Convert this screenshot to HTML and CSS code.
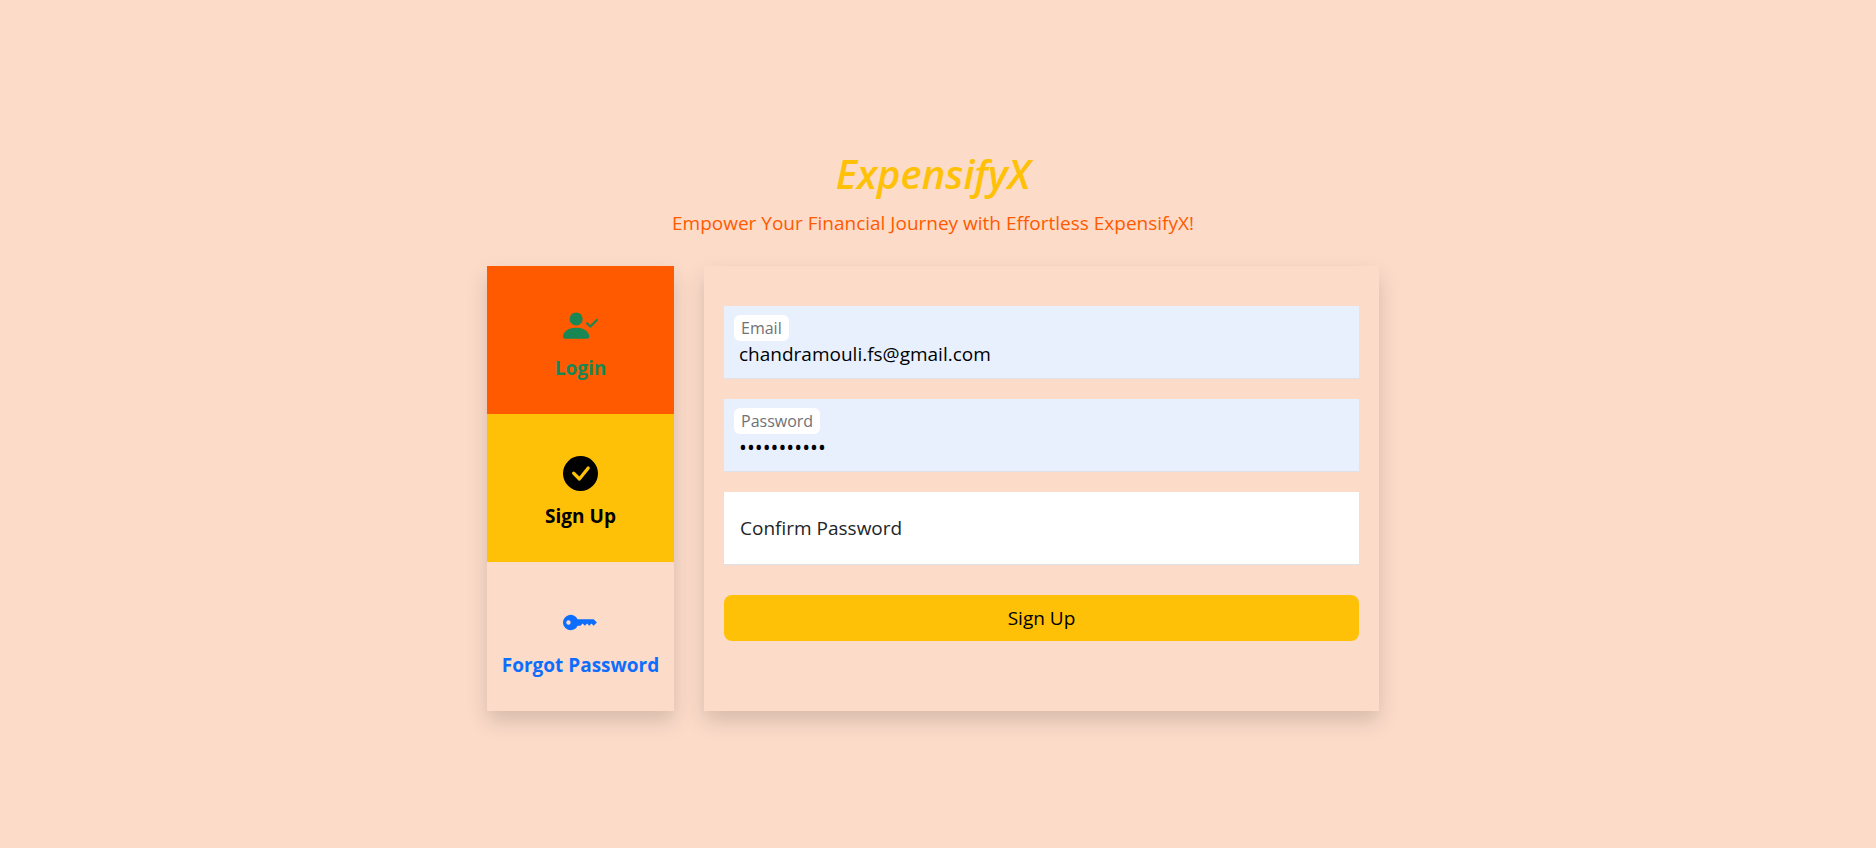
FILE: index.html
```html
<!DOCTYPE html>
<html lang="en">
<head>
<meta charset="utf-8">
<meta name="viewport" content="width=device-width, initial-scale=1">
<title>ExpensifyX</title>
<link rel="stylesheet" href="styles.css">
</head>
<body>
<main class="page">
  <header class="brand">
    <h1 class="brand-name">ExpensifyX</h1>
    <p class="brand-tagline">Empower Your Financial Journey with Effortless ExpensifyX!</p>
  </header>
  <div class="panels">
    <nav class="tabs" aria-label="Account">
      <a class="tab tab-login" href="#login">
        <svg class="tab-icon" viewBox="0 0 16 16" fill="currentColor" aria-hidden="true"><path fill-rule="evenodd" d="M15.854 5.146a.5.5 0 0 1 0 .708l-3 3a.5.5 0 0 1-.708 0l-1.5-1.5a.5.5 0 0 1 .708-.708L12.5 7.793l2.646-2.647a.5.5 0 0 1 .708 0z"/><path d="M1 14s-1 0-1-1 1-4 6-4 6 3 6 4-1 1-1 1H1zm5-6a3 3 0 1 0 0-6 3 3 0 0 0 0 6z"/></svg>
        <span>Login</span>
      </a>
      <a class="tab tab-signup" href="#signup" aria-current="page">
        <svg class="tab-icon" viewBox="0 0 16 16" fill="currentColor" aria-hidden="true"><path d="M16 8A8 8 0 1 1 0 8a8 8 0 0 1 16 0zm-3.97-3.03a.75.75 0 0 0-1.08.022L7.477 9.417 5.384 7.323a.75.75 0 0 0-1.06 1.06L6.97 11.03a.75.75 0 0 0 1.079-.02l3.992-4.99a.75.75 0 0 0-.01-1.05z"/></svg>
        <span>Sign Up</span>
      </a>
      <a class="tab tab-forgot" href="#forgot">
        <svg class="tab-icon" viewBox="0 0 16 16" fill="currentColor" aria-hidden="true"><path d="M3.5 11.5a3.5 3.5 0 1 1 3.163-5H14L15.5 8 14 9.5l-1-1-1 1-1-1-1 1-1-1-1 1H6.663a3.5 3.5 0 0 1-3.163 2zM2.5 9a1 1 0 1 0 0-2 1 1 0 0 0 0 2z"/></svg>
        <span>Forgot Password</span>
      </a>
    </nav>
    <form class="card">
      <div class="field">
        <input class="field-input" id="email" type="email" value="chandramouli.fs@gmail.com" placeholder=" ">
        <label class="field-label" for="email">Email</label>
      </div>
      <div class="field">
        <input class="field-input field-secret" id="password" type="password" value="expensify11" placeholder=" ">
        <label class="field-label" for="password">Password</label>
      </div>
      <div class="field">
        <input class="field-input field-secret" id="confirm" type="password" placeholder=" ">
        <label class="field-label" for="confirm">Confirm Password</label>
      </div>
      <button class="submit" type="button">Sign Up</button>
    </form>
  </div>
</main>
</body>
</html>
```
FILE: styles.css
```css
* {
  box-sizing: border-box;
}

body {
  margin: 0;
  background: #fcdbc9;
  color: #212529;
  font-family: "Segoe UI", "Open Sans", "Noto Sans", sans-serif;
  font-size: 19px;
  line-height: 30px;
}

.page {
  display: flex;
  flex-direction: column;
  align-items: center;
  justify-content: center;
  gap: 28px;
  min-height: 100vh;
  padding: 12px 20px 0 10px;
}

.brand {
  display: flex;
  flex-direction: column;
  gap: 10px;
  text-align: center;
}

.brand-name {
  margin: 0;
  color: #ffc107;
  font-size: 40px;
  font-style: italic;
  font-weight: 600;
  line-height: 48px;
}

.brand-tagline {
  margin: 0;
  color: #ff5a00;
}

.panels {
  display: grid;
  grid-template-columns: 187px minmax(0, 1fr);
  gap: 30px;
  width: 100%;
  max-width: 892px;
}

.tabs,
.card {
  box-shadow: 0 10px 20px rgba(0, 0, 0, 0.15);
}

.tabs {
  display: grid;
  grid-auto-rows: 1fr;
}

.tab {
  display: flex;
  flex-direction: column;
  align-items: center;
  justify-content: center;
  gap: 10px;
  padding-top: 12px;
  font-weight: 700;
  text-decoration: none;
  white-space: nowrap;
}

.tab-icon {
  width: 35px;
  height: 35px;
}

.tab-login {
  background: #ff5a00;
  color: #198754;
}

.tab-signup {
  background: #ffc107;
  color: #000;
}

.tab-forgot {
  color: #0d6efd;
}

.card {
  display: flex;
  flex-direction: column;
  gap: 20px;
  padding: 40px 20px 70px;
  background: #fcdbc9;
}

.field {
  position: relative;
}

.field-input {
  display: block;
  width: 100%;
  height: 73px;
  padding: 34px 15px 10px;
  border: 0;
  border-bottom: 1px solid #dee2e6;
  border-radius: 0;
  background: #e8f0fe;
  color: #000;
  font: inherit;
  line-height: 28px;
}

.field-secret {
  font-size: 21px;
}

.field-input:placeholder-shown {
  background: #fff;
}

.field-label {
  position: absolute;
  top: 9px;
  left: 10px;
  padding: 0 7px;
  border-radius: 6px;
  background: #fff;
  color: #6f7276;
  font-size: 16px;
  line-height: 26px;
}

.field-input:placeholder-shown + .field-label {
  top: 21px;
  left: 9px;
  color: #212529;
  font-size: 19px;
  line-height: 30px;
}

.submit {
  margin-top: 10px;
  padding: 8px 15px;
  border: 0;
  border-radius: 8px;
  background: #ffc107;
  color: #000;
  font: inherit;
}
```
